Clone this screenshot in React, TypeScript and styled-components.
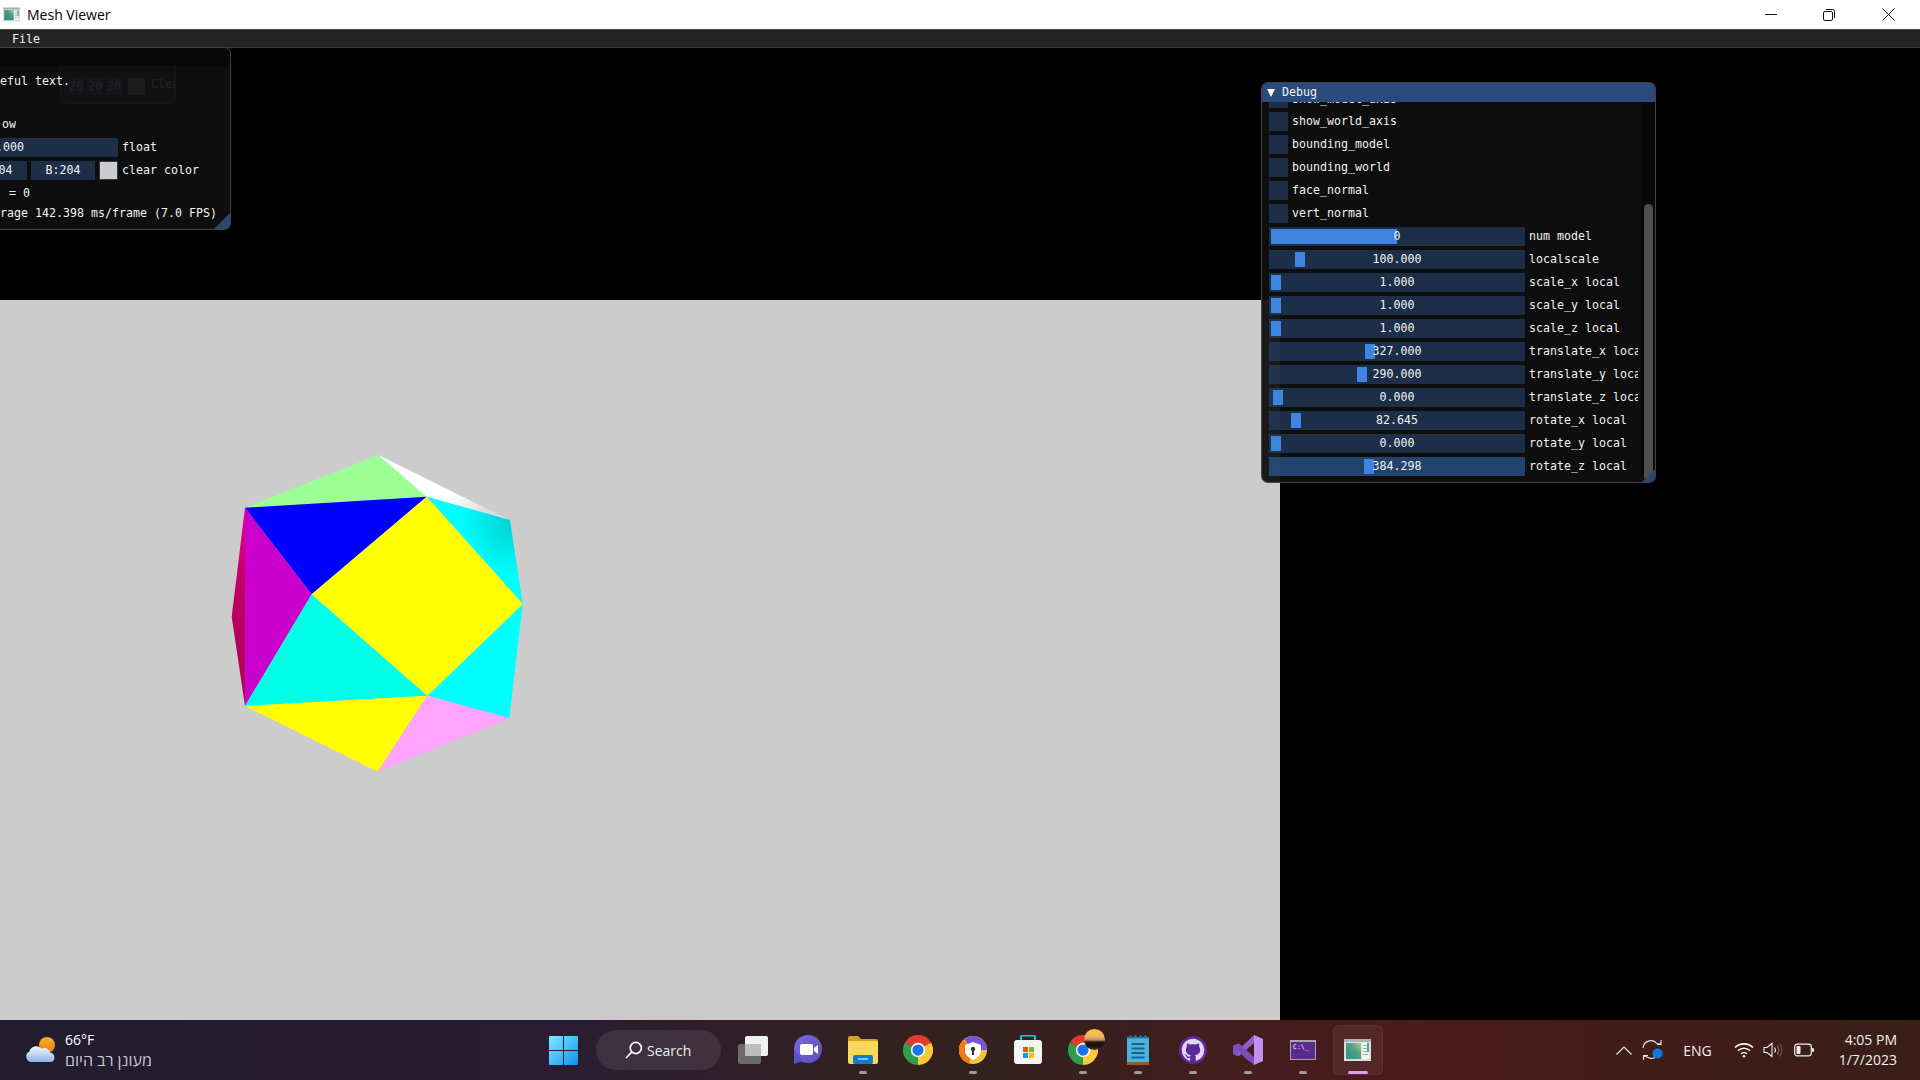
import React from "react";
import styled, { createGlobalStyle } from "styled-components";

const Global = createGlobalStyle`
  html, body { margin: 0; padding: 0; width: 1920px; height: 1080px; overflow: hidden; background: #000; }
  #root { width: 1920px; height: 1080px; }
  * { box-sizing: border-box; }
`;

const Screen = styled.div`
  width: 1920px; height: 1080px; display: flex; flex-direction: column;
  overflow: hidden; font-family: "Open Sans", "Noto Sans", sans-serif;
`;

/* ---------- native title bar ---------- */
const TitleBar = styled.header`
  height: 29px; flex: none; background: #fff; display: flex; align-items: center; padding-left: 3px;
`;
const TitleText = styled.span`
  margin-left: 7px; font-size: 14px; color: #000; flex: 1;
`;
const WinButton = styled.div`
  width: 58px; height: 29px; display: flex; align-items: center; justify-content: center;
  &:last-child { margin-left: 1px; }
`;
const WinButtons = styled.div`
  display: flex; margin-right: 3px;
`;

/* ---------- ImGui ---------- */
const MenuBar = styled.nav`
  height: 19px; flex: none; background: #242424; border-top: 1px solid #484848; border-bottom: 1px solid #3c3c3c;
  display: flex; align-items: center; padding: 1px 0 0 12px;
  font: 11.6px/13px "DejaVu Sans Mono", monospace; color: #f0f0f0;
`;
const Stage = styled.main`
  position: relative; flex: 1; background: #000; min-height: 0;
`;
const TopBlack = styled.div`height: 252px;`;
const GrayFrame = styled.div`
  width: 1280px; height: 720px; background: #ccc; overflow: hidden;
`;
const MeshSvg = styled.svg`display: block;`;

const ImWindow = styled.section<{ $left: number; $top: number; $w: number; $h: number }>`
  position: absolute; left: ${p => p.$left}px; top: ${p => p.$top}px; width: ${p => p.$w}px; height: ${p => p.$h}px;
  background: rgba(15,15,15,.94); border: 1px solid rgba(110,110,128,.55); border-radius: 7px;
  overflow: hidden; display: flex; flex-direction: column;
  font: 11.6px/13px "DejaVu Sans Mono", monospace; color: #f2f2f2; letter-spacing: .02px; white-space: nowrap;
`;
const ImTitle = styled.div<{ $active?: boolean }>`
  height: 19px; flex: none; display: flex; align-items: center; gap: 7px; padding-left: 5px;
  background: ${p => (p.$active ? "#294a7a" : "rgba(8,8,8,.95)")};
`;
const Arrow = styled.span`
  width: 0; height: 0; border-left: 4.5px solid transparent; border-right: 4.5px solid transparent;
  border-top: 8px solid #fff;
`;
const ImBody = styled.div`
  position: relative; z-index: 1;
  flex: 1; min-height: 0; display: flex; flex-direction: column; gap: 4px; padding: 8px 7px;
`;
const Row = styled.div`
  display: flex; align-items: center; gap: 4px; height: 19px; flex: none;
`;
const PlainLine = styled.div`height: 13px; flex: none;`;
const ClippedText = styled.span<{ $from: number }>`
  clip-path: inset(0 0 0 ${p => p.$from}px);
`;
const Frame = styled.div<{ $w: number; $hot?: boolean }>`
  position: relative; flex: none; width: ${p => p.$w}px; height: 19px; text-align: center; line-height: 19px;
  background: ${p => (p.$hot ? "rgba(41,90,150,.72)" : "rgba(41,74,122,.54)")};
`;
const Check = styled.div`
  width: 19px; height: 19px; flex: none; background: rgba(41,74,122,.54);
`;
const Grab = styled.div`
  position: absolute; top: 2px; height: 15px; background: #3d85e0;
`;
const FrameValue = styled.span`position: relative;`;
const Label = styled.span`
  flex: 1; min-width: 0; overflow: hidden;
`;
const Swatch = styled.div`
  width: 19px; height: 19px; flex: none; background: #ccc; border: 1px solid #2b3a52;
`;
const ImButton = styled.div`
  width: 50px; height: 19px; flex: none; background: rgba(66,150,250,.4); text-align: center; line-height: 19px; margin-right: 4px;
`;
const Grip = styled.div<{ $size: number }>`
  position: absolute; z-index: 2; right: 0; bottom: 0; width: ${p => p.$size}px; height: ${p => p.$size}px;
  background: #274a72; clip-path: polygon(100% 0, 100% 100%, 0 100%);
`;
const Ghost = styled.div`
  position: absolute; left: 172px; top: 18px; width: 116px; height: 38px; padding: 12px 8px 0 7px;
  border: 1px solid #161616; border-top: none; border-radius: 0 0 6px 6px; background: #111;
  display: flex; gap: 3px; color: #242424; overflow: hidden;
`;
const GhostCell = styled.div<{ $w: number }>`
  width: ${p => p.$w}px; height: 17px; flex: none; background: #13151a; text-align: center; line-height: 17px;
`;
const GhostBox = styled.div`width: 17px; height: 17px; flex: none; background: #1d1d1d; margin: 0 3px;`;

const DebugInner = styled.div`
  flex: 1; min-height: 0; display: flex;
`;
const DebugClip = styled.div`
  flex: 1; min-width: 0; overflow: hidden; padding-left: 7px; padding-right: 3px;
  display: flex; flex-direction: column; gap: 4px;
`;
const FirstRow = styled(Row)`margin-top: -13px;`;
const PeekText = styled.span`padding-top: 2px;`;
const ScrollTrack = styled.div`
  width: 14px; flex: none; background: rgba(5,5,5,.55); padding: 102px 2px 1px 3px; display: flex;
`;
const ScrollGrab = styled.div`
  flex: 1; background: #4f4f4f; border-radius: 5px;
`;

/* ---------- taskbar ---------- */
const Taskbar = styled.footer`
  height: 60px; flex: none; position: relative; display: flex; align-items: center; color: #fff;
  background: linear-gradient(90deg,#201c2e 0%,#2a1c33 28%,#33211f 47%,#34211f 52%,#431d1f 64%,#4a1b1a 73%,#401d18 88%,#3a1e18 100%);
`;
const Weather = styled.div`
  width: 536px; flex: none; display: flex; align-items: center; padding-left: 25px; gap: 8px;
`;
const WeatherText = styled.div`
  display: flex; flex-direction: column; font-size: 14px; line-height: 20px;
`;
const Muted = styled.span`color: #c9c6cc; font-family: "Open Sans", "DejaVu Sans", sans-serif; font-size: 16px;`;
const Tasks = styled.div`display: flex; align-items: center;`;
const TaskSlot = styled.div`
  position: relative; width: 55px; height: 50px; display: flex; align-items: center; justify-content: center;
`;
const ActiveTile = styled.div`
  position: absolute; left: 3px; right: 2px; top: 0; bottom: 0; border-radius: 6px;
  background: rgba(255,255,255,.055); border: 1px solid rgba(255,255,255,.05);
`;
const Dot = styled.span<{ $active?: boolean }>`
  position: absolute; bottom: 1px; left: 50%; transform: translateX(-50%);
  width: ${p => (p.$active ? 20 : 8)}px; height: 3px; border-radius: 2px;
  background: ${p => (p.$active ? "#d9a0e8" : "#a39a9c")};
`;
const SearchPill = styled.div`
  width: 125px; height: 40px; margin: 0 4px 0 5px; border-radius: 20px; background: rgba(255,255,255,.085); flex: none;
  display: flex; align-items: center; gap: 4px; padding-left: 29px; font-size: 14px; color: #ececec;
`;
const Tray = styled.div`
  position: absolute; right: 0; top: 0; bottom: 0; display: flex; align-items: center; padding-right: 23px;
`;
const TrayItem = styled.div<{ $w: number }>`
  width: ${p => p.$w}px; flex: none; display: flex; align-items: center; justify-content: center; font-size: 14px; color: #f0f0f0;
`;
const Clock = styled.div`
  margin-left: 10px; width: 68px; text-align: right; font-size: 14px; line-height: 20px; color: #f0f0f0;
`;

/* ---------- icons ---------- */
const MeshIcon = ({ w, h, id }: { w: number; h: number; id: string }) => (
  <svg width={w} height={h} viewBox="0 0 27 22">
    <defs>
      <linearGradient id={id} x1="0" y1="1" x2="1" y2="0">
        <stop offset="0" stopColor="#14918a" /><stop offset=".6" stopColor="#4a9c7a" /><stop offset="1" stopColor="#b7c98a" />
      </linearGradient>
    </defs>
    <rect width="27" height="22" fill="#d8dde0" />
    <rect x="0" y="0" width="27" height="3" fill="#a8b0b4" />
    <rect x="2" y="4" width="15" height="16" fill={`url(#${id})`} />
    <rect x="18" y="4" width="7" height="16" fill="#f3f4f4" />
    <rect x="19" y="6" width="5" height="1" fill="#9aa4a8" /><rect x="19" y="9" width="5" height="1" fill="#9aa4a8" />
    <rect x="19" y="12" width="5" height="1" fill="#9aa4a8" /><rect x="19" y="15" width="5" height="1" fill="#9aa4a8" />
    <rect x="23" y="4" width="2" height="9" fill="#4f9d8a" />
  </svg>
);

const Chrome = () => (
  <svg width="30" height="30" viewBox="0 0 48 48">
    <path d="M24 24L3.2 12A24 24 0 0 1 44.8 12Z" fill="#e33b2e" />
    <path d="M24 24L44.8 12A24 24 0 0 1 24 48Z" fill="#fcc934" />
    <path d="M24 24L24 48A24 24 0 0 1 3.2 12Z" fill="#2f9e4a" />
    <circle cx="24" cy="24" r="11.5" fill="#fff" />
    <circle cx="24" cy="24" r="9" fill="#1a73e8" />
  </svg>
);

const StartIcon = () => (
  <svg width="29" height="29" viewBox="0 0 29 29">
    <defs><linearGradient id="win" x1="0" y1="0" x2="1" y2="1"><stop offset="0" stopColor="#82eaff" /><stop offset="1" stopColor="#0b90f4" /></linearGradient></defs>
    <path d="M1 0H14V14H0V1A1 1 0 0 1 1 0ZM15 0H28A1 1 0 0 1 29 1V14H15ZM0 15H14V29H1A1 1 0 0 1 0 28ZM15 15H29V28A1 1 0 0 1 28 29H15Z" fill="url(#win)" />
  </svg>
);

const TaskViewIcon = () => (
  <svg width="30" height="28" viewBox="0 0 30 28">
    <rect x="0" y="8" width="23" height="20" rx="2" fill="#6a6a6a" />
    <rect x="7" y="0" width="23" height="20" rx="2" fill="#f1f1f1" />
    <rect x="7" y="8" width="16" height="12" fill="#bdbdbd" />
  </svg>
);

const ChatIcon = () => (
  <svg width="30" height="30" viewBox="0 0 30 30">
    <defs><linearGradient id="chat" x1="0" y1="0" x2="1" y2="1"><stop offset="0" stopColor="#7a6ae0" /><stop offset="1" stopColor="#5a4fb8" /></linearGradient></defs>
    <circle cx="15" cy="14" r="14" fill="url(#chat)" />
    <path d="M1 14V29L10 26Z" fill="#5d50c0" />
    <rect x="7" y="9" width="13" height="11" rx="2" fill="#fff" />
    <path d="M21 13L25 10V19L21 16Z" fill="#fff" />
  </svg>
);

const FolderIcon = () => (
  <svg width="30" height="28" viewBox="0 0 30 28">
    <path d="M0 2A2 2 0 0 1 2 0H10L13 3H28A2 2 0 0 1 30 5V10H0Z" fill="#d9a21b" />
    <path d="M0 5H30V26A2 2 0 0 1 28 28H2A2 2 0 0 1 0 26Z" fill="#fbd85a" />
    <rect x="5" y="19" width="20" height="9" rx="2" fill="#0f7bd1" />
    <rect x="10" y="22" width="10" height="2" fill="#7cc4f4" />
  </svg>
);

const AvastIcon = () => (
  <svg width="28" height="28" viewBox="0 0 28 28">
    <circle cx="14" cy="14" r="14" fill="#f7c23f" />
    <path d="M14 14L4 4A14 14 0 0 0 10 27.5Z" fill="#f07a13" />
    <path d="M14 14L5 3.5A14 14 0 0 1 28 14Z" fill="#7a52d8" />
    <path d="M14 6L22 9V15C22 19 18 22 14 24C10 22 6 19 6 15V9Z" fill="#fff" />
    <circle cx="14" cy="13" r="2.2" fill="#3a3440" /><rect x="13" y="14" width="2" height="5" fill="#3a3440" />
  </svg>
);

const StoreIcon = () => (
  <svg width="30" height="30" viewBox="0 0 30 30">
    <path d="M8 6V2A1.5 1.5 0 0 1 9.5 .5H20.5A1.5 1.5 0 0 1 22 2V6" fill="none" stroke="#31b6ea" strokeWidth="2" />
    <rect x="1" y="5" width="28" height="24" rx="3" fill="#f4f4f4" />
    <rect x="10" y="12" width="5" height="5" fill="#f0511e" /><rect x="16" y="12" width="5" height="5" fill="#82b801" />
    <rect x="10" y="18" width="5" height="5" fill="#02a4ef" /><rect x="16" y="18" width="5" height="5" fill="#ffb902" />
  </svg>
);

const Blob = styled.div`
  position: absolute; left: 29px; top: 4px; width: 21px; height: 21px; border-radius: 50%;
  background: linear-gradient(180deg,#f7c64c 0%,#ecb95a 35%,#c98a60 52%,#241714 62%,#1a1210 85%,#5a4030 100%);
`;

const NotepadIcon = () => (
  <svg width="22" height="30" viewBox="0 0 22 30">
    <rect y="2" width="22" height="26" rx="1" fill="#4ab4dd" />
    <rect y="27" width="22" height="3" fill="#9a5a26" />
    <rect x="0" y="2" width="22" height="1.5" fill="#1d7ea6" />
    {[2, 7, 12, 17].map(x => <circle key={x} cx={x + 1.5} cy="1.8" r="1.5" fill="#1d7ea6" />)}
    {[8, 12.5, 17, 21.5].map(y => <rect key={y} x="4.5" y={y} width="13" height="2" fill="#17648a" />)}
  </svg>
);

const GithubIcon = () => (
  <svg width="28" height="28" viewBox="0 0 16 16">
    <circle cx="8" cy="8" r="8" fill="#5c2a94" />
    <path fill="#e4d6f3" transform="translate(1.6 1.6) scale(.8)" d="M8 0C3.58 0 0 3.58 0 8c0 3.54 2.29 6.53 5.47 7.59.4.07.55-.17.55-.38 0-.19-.01-.82-.01-1.49-2.01.37-2.53-.49-2.69-.94-.09-.23-.48-.94-.82-1.13-.28-.15-.68-.52-.01-.53.63-.01 1.08.58 1.23.82.72 1.21 1.87.87 2.33.66.07-.52.28-.87.51-1.07-1.78-.2-3.64-.89-3.64-3.95 0-.87.31-1.59.82-2.15-.08-.2-.36-1.02.08-2.12 0 0 .67-.21 2.2.82.64-.18 1.32-.27 2-.27s1.36.09 2 .27c1.53-1.04 2.2-.82 2.2-.82.44 1.1.16 1.92.08 2.12.51.56.82 1.27.82 2.15 0 3.07-1.87 3.75-3.65 3.95.29.25.54.73.54 1.48 0 1.07-.01 1.93-.01 2.2 0 .21.15.46.55.38A8.01 8.01 0 0 0 16 8c0-4.42-3.58-8-8-8z" />
  </svg>
);

const VsIcon = () => (
  <svg width="30" height="30" viewBox="0 0 30 30">
    <path d="M21 0L30 4V26L21 30Z" fill="#c490f2" />
    <path d="M21 0V8L6 21L1 19Z" fill="#8a63c9" />
    <path d="M1 10.5L6 8.5L21 22V30L12 23Z" fill="#7650b6" />
    <path d="M0 11L5 8.5V21.5L0 19Z" fill="#7b55bb" />
  </svg>
);

const TerminalIcon = () => (
  <svg width="26" height="20" viewBox="0 0 26 20">
    <rect width="26" height="20" fill="#a8a4ac" />
    <rect x="1" y="2" width="24" height="17" fill="#5a2a8e" />
    <text x="3" y="9" fontFamily="DejaVu Sans Mono" fontSize="6.5" fill="#fff">C:\_</text>
  </svg>
);

const SearchGlyph = () => (
  <svg width="18" height="18" viewBox="0 0 18 18" fill="none" stroke="#f4f4f4" strokeWidth="1.8" strokeLinecap="round">
    <circle cx="10.8" cy="7" r="5.6" /><path d="M6.6 11.2L1.5 16.5" />
  </svg>
);

const CloudIcon = () => (
  <svg width="32" height="26" viewBox="0 0 32 26">
    <defs>
      <linearGradient id="sun" x1="0" y1="0" x2="0" y2="1"><stop offset="0" stopColor="#f8b02a" /><stop offset="1" stopColor="#e97d10" /></linearGradient>
      <linearGradient id="cloud" x1="0" y1="0" x2="0" y2="1"><stop offset="0" stopColor="#f4f7fc" /><stop offset="1" stopColor="#8fb4ea" /></linearGradient>
    </defs>
    <circle cx="22" cy="8" r="8" fill="url(#sun)" />
    <path d="M6 25A5.5 5.5 0 0 1 4.5 14.5C5.5 9.5 13 7 16.5 12A5.5 5.5 0 0 1 25 15.5A5 5 0 0 1 26.5 25Z" fill="url(#cloud)" />
  </svg>
);

const Caret = () => <svg width="16" height="9" viewBox="0 0 16 9" fill="none" stroke="#e8e8e8" strokeWidth="1.2"><path d="M.5 8.5L8 1L15.5 8.5" /></svg>;
const SyncIcon = () => (
  <svg width="22" height="22" viewBox="0 0 22 22" fill="none" stroke="#e8e8e8" strokeWidth="1.1">
    <path d="M1 9A8 8 0 0 1 15 4.5L19 5" /><path d="M19 1V5.5H15" />
    <path d="M16 16A8 8 0 0 1 5 18L1.5 17" /><path d="M1.5 21V16.5H6" />
    <circle cx="15.5" cy="14.5" r="5" fill="#0a78e0" stroke="none" />
  </svg>
);
const WifiIcon = () => (
  <svg width="20" height="16" viewBox="0 0 20 16" fill="none" stroke="#f4f4f4" strokeWidth="1.6">
    <path d="M1 5.5A13 13 0 0 1 19 5.5" /><path d="M4 8.8A8.5 8.5 0 0 1 16 8.8" /><path d="M7 11.8A4.2 4.2 0 0 1 13 11.8" />
    <circle cx="10" cy="14.2" r="1.2" fill="#f4f4f4" stroke="none" />
  </svg>
);
const SpeakerIcon = () => (
  <svg width="20" height="18" viewBox="0 0 20 18" fill="none" stroke="#f0f0f0" strokeWidth="1.1">
    <path d="M1 6.5H4L9 2.5V15.5L4 11.5H1Z" />
    <path d="M11.5 6.5A4 4 0 0 1 11.5 11.5" /><path d="M14 4.5A7 7 0 0 1 14 13.5" stroke="#8b7f7c" /><path d="M16.5 2.5A10 10 0 0 1 16.5 15.5" stroke="#6b5a56" />
  </svg>
);
const BatteryIcon = () => (
  <svg width="20" height="14" viewBox="0 0 20 14">
    <rect x=".7" y="1.2" width="16.6" height="11.6" rx="2.5" fill="none" stroke="#f0f0f0" strokeWidth="1.2" />
    <rect x="2.5" y="3" width="4" height="8" rx="1" fill="#f0f0f0" />
    <rect x="18" y="5" width="2" height="4" rx="1" fill="#f0f0f0" />
  </svg>
);

/* ---------- data ---------- */
const sliders = [
  { label: "num model", value: "0", x: 2, w: 126 },
  { label: "localscale", value: "100.000", x: 26, w: 10 },
  { label: "scale_x local", value: "1.000", x: 2, w: 10 },
  { label: "scale_y local", value: "1.000", x: 2, w: 10 },
  { label: "scale_z local", value: "1.000", x: 2, w: 10 },
  { label: "translate_x local", value: "327.000", x: 96, w: 10 },
  { label: "translate_y local", value: "290.000", x: 88, w: 10 },
  { label: "translate_z local", value: "0.000", x: 4, w: 10 },
  { label: "rotate_x local", value: "82.645", x: 22, w: 10 },
  { label: "rotate_y local", value: "0.000", x: 2, w: 10 },
  { label: "rotate_z local", value: "384.298", x: 95, w: 10, hot: true },
];
const checks = ["show_world_axis", "bounding_model", "bounding_world", "face_normal", "vert_normal"];

const P = {
  A: "378.3,155", B: "426.7,196.7", C: "510,220", D: "522.7,304", E: "509.3,418.3", F: "427.3,395.7",
  G: "377.7,471.7", H: "245,406", I: "231.7,316.7", J: "245,207.7", K: "311.7,294.3",
};
const faces: [string[], string][] = [
  [[P.A, P.B, P.J], "#9bff94"],
  [[P.A, P.C, P.B], "url(#whiteFace)"],
  [[P.B, P.C, P.D], "url(#cyanFace)"],
  [[P.D, P.E, P.F], "#00ffff"],
  [[P.J, P.H, P.I], "url(#crimsonFace)"],
  [[P.J, P.K, P.H], "#cc00cc"],
  [[P.K, P.F, P.H], "#00ffe6"],
  [[P.H, P.F, P.G], "#ffff00"],
  [[P.F, P.E, P.G], "#ffa3ff"],
  [[P.J, P.B, P.K], "#0000ff"],
  [[P.K, P.B, P.D, P.F], "#ffff00"],
];

export default function App() {
  return (
    <Screen>
      <Global />
      <TitleBar>
        <MeshIcon w={17} h={15} id="meshTitle" />
        <TitleText>Mesh Viewer</TitleText>
        <WinButtons>
          <WinButton>
            <svg width="12" height="2" viewBox="0 0 12 2"><rect width="12" height="1" fill="#111" /></svg>
          </WinButton>
          <WinButton>
            <svg width="12" height="12" viewBox="0 0 12 12" fill="none" stroke="#111"><rect x=".5" y="2.5" width="9" height="9" rx="1.5" /><path d="M3 .5H9.5A2 2 0 0 1 11.5 2.5V9" /></svg>
          </WinButton>
          <WinButton>
            <svg width="13" height="13" viewBox="0 0 13 13" stroke="#111"><path d="M.5 .5L12.5 12.5M12.5 .5L.5 12.5" /></svg>
          </WinButton>
        </WinButtons>
      </TitleBar>
      <MenuBar>File</MenuBar>
      <Stage>
        <TopBlack />
        <GrayFrame>
          <MeshSvg width="1280" height="720" viewBox="0 0 1280 720">
            <defs>
              <linearGradient id="whiteFace" x1="0" y1="0" x2="1" y2="0.4"><stop offset="0" stopColor="#fff" /><stop offset=".7" stopColor="#fff" /><stop offset="1" stopColor="#dcdcdc" /></linearGradient>
              <radialGradient id="cyanFace" gradientUnits="userSpaceOnUse" cx="510" cy="224" r="50"><stop offset="0" stopColor="#00d2d2" /><stop offset="1" stopColor="#00ffff" /></radialGradient>
              <linearGradient id="crimsonFace" x1="0" y1="0" x2="0" y2="1"><stop offset="0" stopColor="#e6008c" /><stop offset=".45" stopColor="#bb0060" /><stop offset="1" stopColor="#b0005c" /></linearGradient>
            </defs>
            {faces.map(([pts, fill], i) => <polygon key={i} points={pts.join(" ")} fill={fill} />)}
          </MeshSvg>
        </GrayFrame>

        <ImWindow $left={-113} $top={-1} $w={344} $h={183}>
          <ImTitle>Hello, world!</ImTitle>
          <ImBody>
            <PlainLine>This is some useful text.</PlainLine>
            <Row><Check />Demo Window</Row>
            <Row><Check /><ClippedText $from={84}>Another Window</ClippedText></Row>
            <Row>
              <Frame $w={223}><FrameValue>0.000</FrameValue></Frame>
              <Label>float</Label>
            </Row>
            <Row>
              <Frame $w={64}>R:204</Frame>
              <Frame $w={64}>G:204</Frame>
              <Frame $w={64}>B:204</Frame>
              <Swatch />
              <Label>clear color</Label>
            </Row>
            <Row><ImButton>Button</ImButton><ClippedText $from={49}>counter = 0</ClippedText></Row>
            <PlainLine>Application average 142.398 ms/frame (7.0 FPS)</PlainLine>
          </ImBody>
          <Ghost>
            <GhostCell $w={16}>20</GhostCell>
            <GhostCell $w={16}>20</GhostCell>
            <GhostCell $w={16}>20</GhostCell>
            <GhostBox />
            <span>Clear</span>
          </Ghost>
          <Grip $size={16} />
        </ImWindow>

        <ImWindow $left={1261} $top={34} $w={395} $h={401}>
          <ImTitle $active><Arrow />Debug</ImTitle>
          <DebugInner>
            <DebugClip>
              <FirstRow><Check /><PeekText>show_model_axis</PeekText></FirstRow>
              {checks.map(c => <Row key={c}><Check />{c}</Row>)}
              {sliders.map(s => (
                <Row key={s.label}>
                  <Frame $w={256} $hot={s.hot}>
                    <Grab style={{ left: s.x, width: s.w }} />
                    <FrameValue>{s.value}</FrameValue>
                  </Frame>
                  <Label>{s.label}</Label>
                </Row>
              ))}
            </DebugClip>
            <ScrollTrack><ScrollGrab /></ScrollTrack>
          </DebugInner>
          <Grip $size={13} />
        </ImWindow>
      </Stage>

      <Taskbar>
        <Weather>
          <CloudIcon />
          <WeatherText>
            <span>66°F</span>
            <Muted>מעונן רב היום</Muted>
          </WeatherText>
        </Weather>
        <Tasks>
          <TaskSlot><StartIcon /></TaskSlot>
          <SearchPill><SearchGlyph />Search</SearchPill>
          <TaskSlot><TaskViewIcon /></TaskSlot>
          <TaskSlot><ChatIcon /></TaskSlot>
          <TaskSlot><FolderIcon /><Dot /></TaskSlot>
          <TaskSlot><Chrome /></TaskSlot>
          <TaskSlot><AvastIcon /><Dot /></TaskSlot>
          <TaskSlot><StoreIcon /></TaskSlot>
          <TaskSlot><Chrome /><Blob /><Dot /></TaskSlot>
          <TaskSlot><NotepadIcon /><Dot /></TaskSlot>
          <TaskSlot><GithubIcon /><Dot /></TaskSlot>
          <TaskSlot><VsIcon /><Dot /></TaskSlot>
          <TaskSlot><TerminalIcon /><Dot /></TaskSlot>
          <TaskSlot><ActiveTile /><MeshIcon w={27} h={22} id="meshTask" /><Dot $active /></TaskSlot>
        </Tasks>
        <Tray>
          <TrayItem $w={36}><Caret /></TrayItem>
          <TrayItem $w={22}><SyncIcon /></TrayItem>
          <TrayItem $w={67}>ENG</TrayItem>
          <TrayItem $w={26}><WifiIcon /></TrayItem>
          <TrayItem $w={32}><SpeakerIcon /></TrayItem>
          <TrayItem $w={30}><BatteryIcon /></TrayItem>
          <Clock>4:05 PM<br />1/7/2023</Clock>
        </Tray>
      </Taskbar>
    </Screen>
  );
}
